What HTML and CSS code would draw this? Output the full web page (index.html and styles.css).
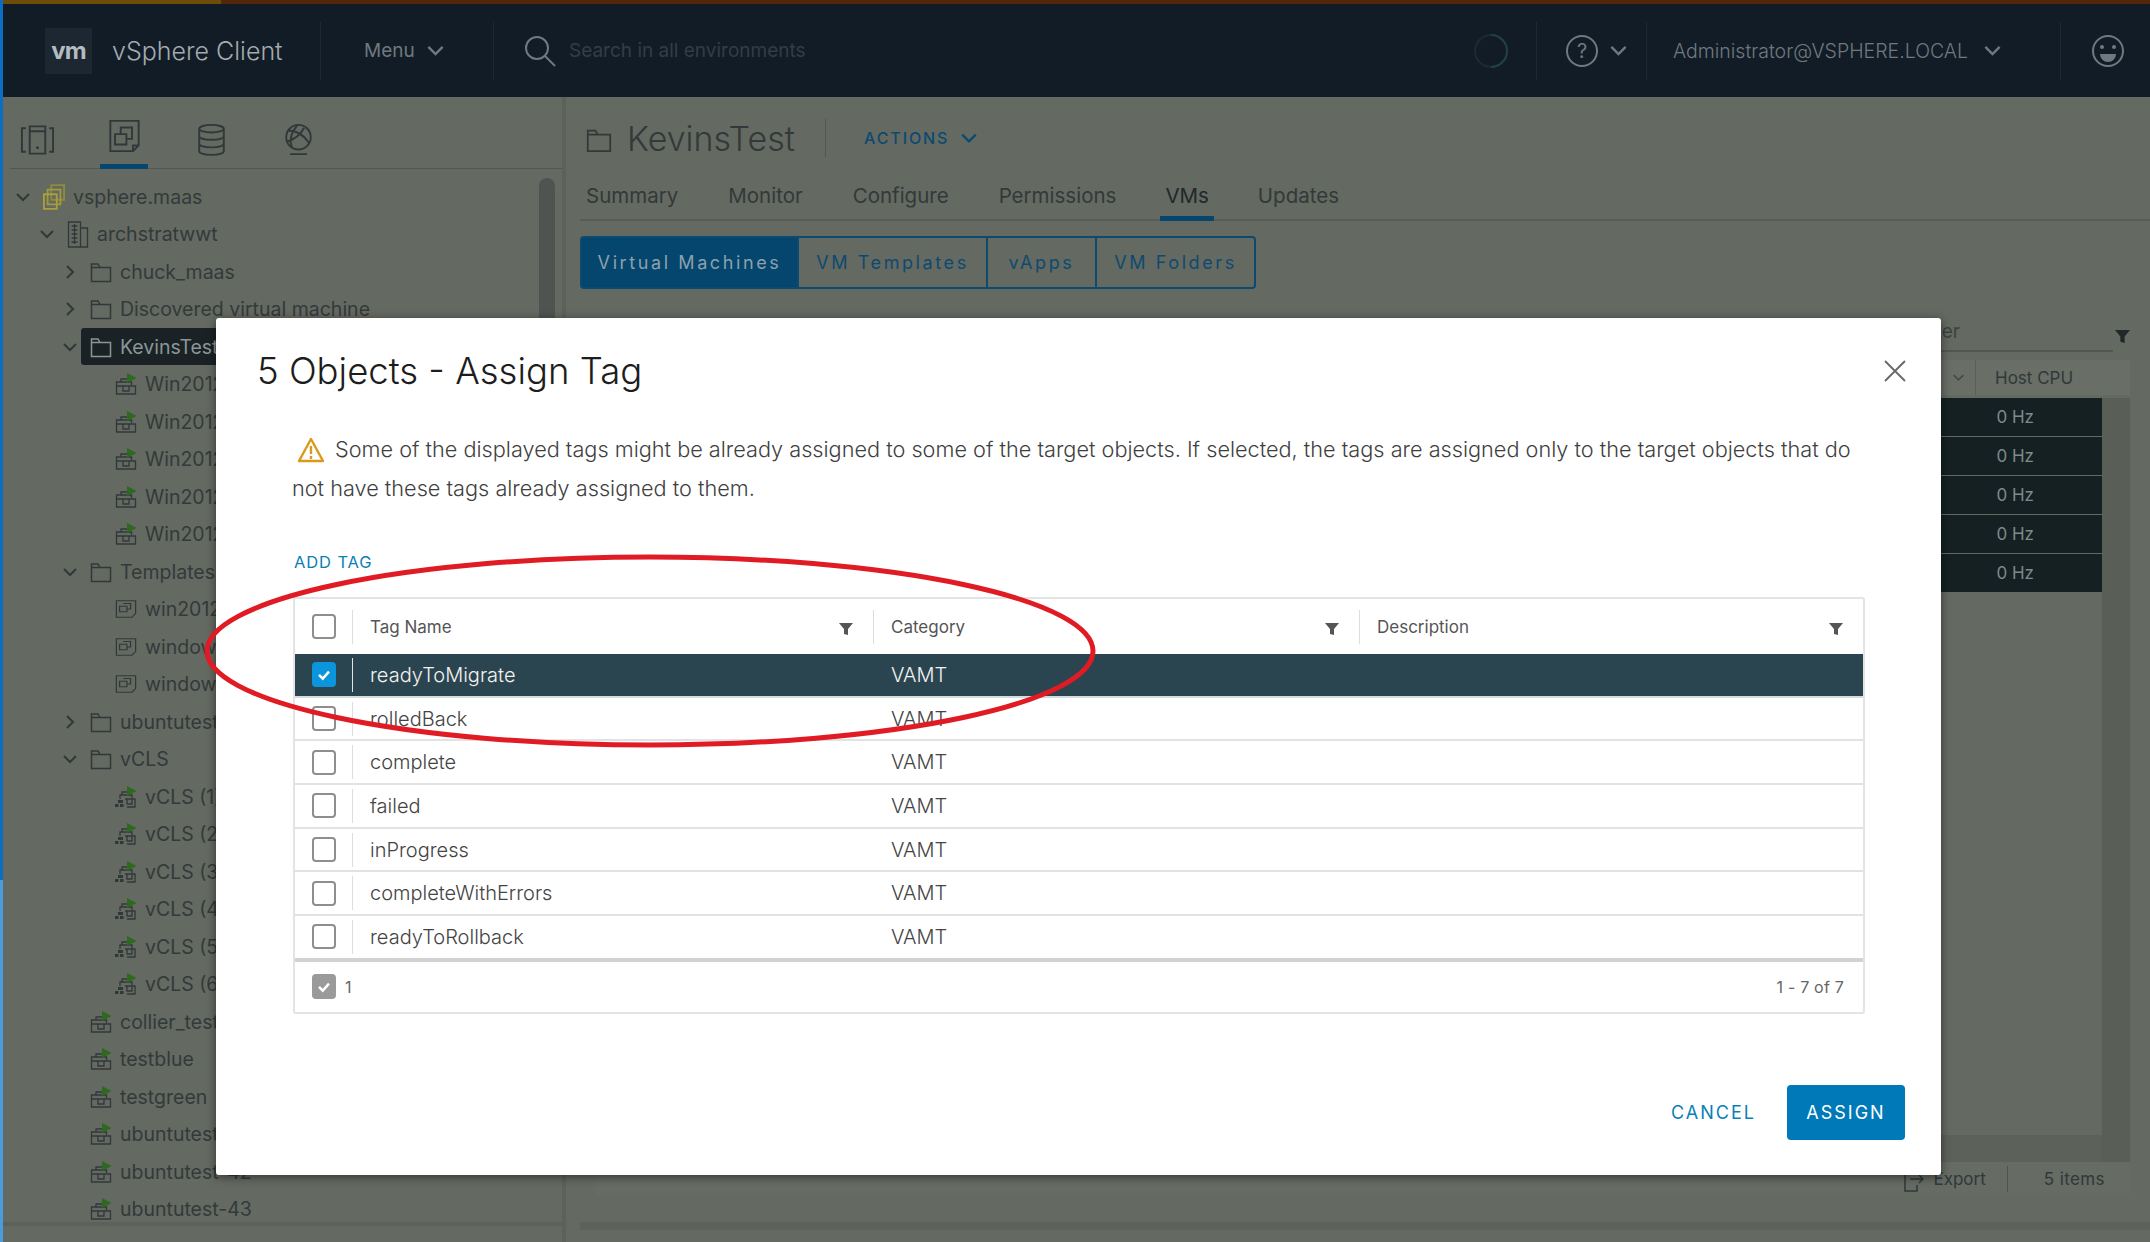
FILE: index.html
```html
<!DOCTYPE html>
<html lang="en">
<head>
  <meta charset="UTF-8">
  <title>vSphere Client</title>
  <link rel="stylesheet" href="styles.css">
</head>
<body>
  <svg class="defs" width="0" height="0">
    <symbol id="i-folder" viewBox="0 0 22 22"><path d="M1.5 20.5V3h6.5l2 3.5h10.500v14z M1.500 6.500h8.500" fill="none" stroke="currentColor" stroke-width="1.500"/></symbol>
    <symbol id="i-vm" viewBox="0 0 22 22"><path d="M6 9V6h7 M1.500 13V9h15v3 M1.500 13v8h19v-8z M8 13v5h6v-5 M1.500 13h19" fill="none" stroke="currentColor" stroke-width="1.300"/><path d="M12 0l9.500 5-9.500 5z" fill="#2c6a1f"/></symbol>
    <symbol id="i-vcls" viewBox="0 0 22 22"><path d="M7 9V6h6 M5 13V9h12v3 M10 13h10v8h-8 M12 13v5h5v-5" fill="none" stroke="currentColor" stroke-width="1.300"/><path d="M12 0l9.500 5-9.500 5z" fill="#2c6a1f"/><path d="M3 14h5v3H3z M0 18h3.500v3H0z M5 18h3.500v3H5z" fill="currentColor"/></symbol>
    <symbol id="i-tpl" viewBox="0 0 24 22"><path d="M1.500 2h21v14l-4 4H1.500z" fill="none" stroke="currentColor" stroke-width="1.300"/><path d="M5 8h8v6H5z M9 5h8v6h-4" fill="none" stroke="currentColor" stroke-width="1.300"/></symbol>
    <symbol id="i-dc" viewBox="0 0 22 28"><path d="M1.500 2h12v25h-12z M13.500 8h7v19h-7 M4.500 6h6 M4.500 10h6 M4.500 14h6 M4.500 18h6 M4.500 22h6 M7.500 4v20" fill="none" stroke="currentColor" stroke-width="1.300"/></symbol>
    <symbol id="i-cluster" viewBox="0 0 24 30"><path d="M9 2h14v16H9z" fill="none" stroke="#8f8a3c" stroke-width="2"/><path d="M5 7h14v16H5z" fill="none" stroke="#a39a3a" stroke-width="2"/><path d="M1 12h14v16H1z" fill="none" stroke="#a89f3e" stroke-width="2"/></symbol>
    <symbol id="i-filter" viewBox="0 0 14 14"><path d="M0 1h14L9 7v6l-4-1V7z" fill="currentColor"/></symbol>
    <symbol id="i-chev" viewBox="0 0 16 16"><path d="M2 5l6 6 6-6" fill="none" stroke="currentColor" stroke-width="2"/></symbol>
    <symbol id="i-check" viewBox="0 0 24 24"><path d="M6 12.500l4.500 4.500L18 8.500" fill="none" stroke="#fff" stroke-width="3"/></symbol>
  </svg>

  <div class="page">
    <div class="edge"></div>
    <div class="app">
      <div class="topstrip"></div>
      <header class="header">
        <div class="logo">vm</div>
        <div class="brand">vSphere Client</div>
        <div class="hsep"></div>
        <div class="menu">Menu <svg class="hchev"><use href="#i-chev"/></svg></div>
        <div class="hsep"></div>
        <svg class="search-icon" viewBox="0 0 32 32"><circle cx="13" cy="13" r="11" fill="none" stroke="currentColor" stroke-width="2"/><path d="M21 21l10 10" stroke="currentColor" stroke-width="2"/></svg>
        <div class="search-text">Search in all environments</div>
        <svg class="spinner" viewBox="0 0 36 36"><circle cx="18" cy="18" r="16" fill="none" stroke="#1c2a33" stroke-width="2"/><path d="M18 2a16 16 0 0 1 0 32" fill="none" stroke="#22404a" stroke-width="2"/></svg>
        <div class="hsep sep-spin"></div>
        <svg class="help" viewBox="0 0 34 34"><circle cx="17" cy="17" r="15" fill="none" stroke="currentColor" stroke-width="2"/><text x="17" y="24" text-anchor="middle" class="help-mark">?</text></svg>
        <svg class="hchev"><use href="#i-chev"/></svg>
        <div class="hsep sep-help"></div>
        <div class="user">Administrator@VSPHERE.LOCAL</div>
        <svg class="hchev"><use href="#i-chev"/></svg>
        <div class="hsep sep-user"></div>
        <svg class="smile" viewBox="0 0 34 34"><circle cx="17" cy="17" r="15" fill="none" stroke="currentColor" stroke-width="2"/><circle cx="11" cy="13" r="2" fill="currentColor"/><circle cx="23" cy="13" r="2" fill="currentColor"/><path d="M9 20h16a8 8 0 0 1-16 0z" fill="currentColor"/></svg>
      </header>

      <div class="content">
        <aside class="sidebar">
          <div class="nav-icons">
            <div class="nav-icon">
              <svg viewBox="0 0 36 32"><path d="M6 4H2v24h4 M30 4h4v24h-4 M10 2h16v28H10z M10 7h16" fill="none" stroke="currentColor" stroke-width="2"/><circle cx="18" cy="24" r="1.500" fill="currentColor"/></svg>
            </div>
            <div class="nav-icon active">
              <svg viewBox="0 0 36 36"><path d="M3 2h30v26l-6 6H3z M33 28h-6v6" fill="none" stroke="currentColor" stroke-width="2"/><path d="M8 16h12v11H8z M14 16V9h12v12h-6" fill="none" stroke="currentColor" stroke-width="2"/></svg>
            </div>
            <div class="nav-icon">
              <svg viewBox="0 0 32 36"><ellipse cx="16" cy="6" rx="13" ry="4" fill="none" stroke="currentColor" stroke-width="2"/><path d="M3 6v24c0 5 26 5 26 0V6 M3 14c0 5 26 5 26 0 M3 22c0 5 26 5 26 0" fill="none" stroke="currentColor" stroke-width="2"/></svg>
            </div>
            <div class="nav-icon">
              <svg viewBox="0 0 32 36"><circle cx="16" cy="15" r="13" fill="none" stroke="currentColor" stroke-width="2"/><path d="M5 8c8 0 16 4 22 13 M15 2C8 10 6 18 9 26 M22 5c-3 6-9 12-19 15 M7 33h18" fill="none" stroke="currentColor" stroke-width="2"/></svg>
            </div>
          </div>
          <div class="tree-wrap">
            <ul class="tree">
              <li class="node lvl-0"><svg class="chev"><use href="#i-chev"/></svg><svg class="ticon tall"><use href="#i-cluster"/></svg>vsphere.maas</li>
              <li class="node lvl-1"><svg class="chev"><use href="#i-chev"/></svg><svg class="ticon tall"><use href="#i-dc"/></svg>archstratwwt</li>
              <li class="node lvl-2"><svg class="chev closed"><use href="#i-chev"/></svg><svg class="ticon"><use href="#i-folder"/></svg>chuck_maas</li>
              <li class="node lvl-2"><svg class="chev closed"><use href="#i-chev"/></svg><svg class="ticon"><use href="#i-folder"/></svg>Discovered virtual machine</li>
              <li class="node lvl-2 selected"><svg class="chev"><use href="#i-chev"/></svg><span class="sel-bg"><svg class="ticon"><use href="#i-folder"/></svg>KevinsTest</span></li>
              <li class="node lvl-3"><span class="chev"></span><svg class="ticon"><use href="#i-vm"/></svg>Win2012-1</li>
              <li class="node lvl-3"><span class="chev"></span><svg class="ticon"><use href="#i-vm"/></svg>Win2012-2</li>
              <li class="node lvl-3"><span class="chev"></span><svg class="ticon"><use href="#i-vm"/></svg>Win2012-3</li>
              <li class="node lvl-3"><span class="chev"></span><svg class="ticon"><use href="#i-vm"/></svg>Win2012-4</li>
              <li class="node lvl-3"><span class="chev"></span><svg class="ticon"><use href="#i-vm"/></svg>Win2012-5</li>
              <li class="node lvl-2"><svg class="chev"><use href="#i-chev"/></svg><svg class="ticon"><use href="#i-folder"/></svg>Templates</li>
              <li class="node lvl-3"><span class="chev"></span><svg class="ticon"><use href="#i-tpl"/></svg>win2012</li>
              <li class="node lvl-3"><span class="chev"></span><svg class="ticon"><use href="#i-tpl"/></svg>windows</li>
              <li class="node lvl-3"><span class="chev"></span><svg class="ticon"><use href="#i-tpl"/></svg>windows</li>
              <li class="node lvl-2"><svg class="chev closed"><use href="#i-chev"/></svg><svg class="ticon"><use href="#i-folder"/></svg>ubuntutest</li>
              <li class="node lvl-2"><svg class="chev"><use href="#i-chev"/></svg><svg class="ticon"><use href="#i-folder"/></svg>vCLS</li>
              <li class="node lvl-3"><span class="chev"></span><svg class="ticon"><use href="#i-vcls"/></svg>vCLS (1)</li>
              <li class="node lvl-3"><span class="chev"></span><svg class="ticon"><use href="#i-vcls"/></svg>vCLS (2)</li>
              <li class="node lvl-3"><span class="chev"></span><svg class="ticon"><use href="#i-vcls"/></svg>vCLS (3)</li>
              <li class="node lvl-3"><span class="chev"></span><svg class="ticon"><use href="#i-vcls"/></svg>vCLS (4)</li>
              <li class="node lvl-3"><span class="chev"></span><svg class="ticon"><use href="#i-vcls"/></svg>vCLS (5)</li>
              <li class="node lvl-3"><span class="chev"></span><svg class="ticon"><use href="#i-vcls"/></svg>vCLS (6)</li>
              <li class="node lvl-2"><span class="chev"></span><svg class="ticon"><use href="#i-vm"/></svg>collier_test</li>
              <li class="node lvl-2"><span class="chev"></span><svg class="ticon"><use href="#i-vm"/></svg>testblue</li>
              <li class="node lvl-2"><span class="chev"></span><svg class="ticon"><use href="#i-vm"/></svg>testgreen</li>
              <li class="node lvl-2"><span class="chev"></span><svg class="ticon"><use href="#i-vm"/></svg>ubuntutest</li>
              <li class="node lvl-2"><span class="chev"></span><svg class="ticon"><use href="#i-vm"/></svg>ubuntutest-42</li>
              <li class="node lvl-2"><span class="chev"></span><svg class="ticon"><use href="#i-vm"/></svg>ubuntutest-43</li>
            </ul>
            <div class="tree-scroll"></div>
          </div>
        </aside>

        <main class="main">
          <div class="title-row">
            <svg class="title-folder"><use href="#i-folder"/></svg>
            <h1>KevinsTest</h1>
            <div class="title-sep"></div>
            <div class="actions">ACTIONS <svg class="actions-chev"><use href="#i-chev"/></svg></div>
          </div>
          <nav class="tabs">
            <span class="tab">Summary</span>
            <span class="tab">Monitor</span>
            <span class="tab">Configure</span>
            <span class="tab">Permissions</span>
            <span class="tab active">VMs</span>
            <span class="tab">Updates</span>
          </nav>
          <div class="subnav">
            <span class="sub active">Virtual Machines</span>
            <span class="sub w-tpl">VM Templates</span>
            <span class="sub w-app">vApps</span>
            <span class="sub w-fold">VM Folders</span>
          </div>

          <div class="grid">
            <div class="grid-filter">
              <span class="filter-box">Filter</span>
              <svg class="grid-funnel"><use href="#i-filter"/></svg>
            </div>
            <div class="grid-head">
              <svg class="head-chev"><use href="#i-chev"/></svg>
              <span class="head-cell">Host CPU</span>
            </div>
            <div class="grid-body">
              <div class="grid-rows">
                <div class="grid-row">0 Hz</div>
                <div class="grid-row">0 Hz</div>
                <div class="grid-row">0 Hz</div>
                <div class="grid-row">0 Hz</div>
                <div class="grid-row">0 Hz</div>
                <div class="grid-hscroll"></div>
              </div>
              <div class="grid-vscroll"></div>
            </div>
            <div class="grid-foot">
              <svg class="export-icon" viewBox="0 0 20 26"><path d="M13 8V2H1v23h12v-6 M6 13h13 M15 9l4 4-4 4" fill="none" stroke="currentColor" stroke-width="1.500"/></svg>
              <span>Export</span>
              <span class="foot-sep"></span>
              <span class="foot-count">5 items</span>
            </div>
          </div>
          <div class="main-bottom"></div>
        </main>
      </div>
    </div>

    <section class="modal">
      <div class="modal-head">
        <h2>5 Objects - Assign Tag</h2>
        <svg class="close" viewBox="0 0 22 22"><path d="M1 1l20 20M21 1L1 21" stroke="currentColor" stroke-width="1.800"/></svg>
      </div>
      <p class="warning"><svg class="warn-icon" viewBox="0 0 28 26"><path d="M14 2l12 22H2z" fill="none" stroke="#d99a1c" stroke-width="2.400" stroke-linejoin="round"/><path d="M14 9v8M14 19v3" stroke="#d99a1c" stroke-width="2.400"/></svg>Some of the displayed tags might be already assigned to some of the target objects. If selected, the tags are assigned only to the target objects that do<br>not have these tags already assigned to them.</p>
      <a class="add-tag">ADD TAG</a>
      <div class="tag-table">
        <div class="tag-row tag-head">
          <span class="cb-cell"><span class="cb"></span></span>
          <span class="cell">Tag Name<svg class="funnel"><use href="#i-filter"/></svg></span>
          <span class="cell">Category<svg class="funnel"><use href="#i-filter"/></svg></span>
          <span class="cell">Description<svg class="funnel"><use href="#i-filter"/></svg></span>
        </div>
        <div class="tag-row picked">
          <span class="cb-cell"><span class="cb on"><svg><use href="#i-check"/></svg></span></span>
          <span class="cell">readyToMigrate</span><span class="cell">VAMT</span><span class="cell"></span>
        </div>
        <div class="tag-row">
          <span class="cb-cell"><span class="cb"></span></span>
          <span class="cell">rolledBack</span><span class="cell">VAMT</span><span class="cell"></span>
        </div>
        <div class="tag-row">
          <span class="cb-cell"><span class="cb"></span></span>
          <span class="cell">complete</span><span class="cell">VAMT</span><span class="cell"></span>
        </div>
        <div class="tag-row">
          <span class="cb-cell"><span class="cb"></span></span>
          <span class="cell">failed</span><span class="cell">VAMT</span><span class="cell"></span>
        </div>
        <div class="tag-row">
          <span class="cb-cell"><span class="cb"></span></span>
          <span class="cell">inProgress</span><span class="cell">VAMT</span><span class="cell"></span>
        </div>
        <div class="tag-row">
          <span class="cb-cell"><span class="cb"></span></span>
          <span class="cell">completeWithErrors</span><span class="cell">VAMT</span><span class="cell"></span>
        </div>
        <div class="tag-row">
          <span class="cb-cell"><span class="cb"></span></span>
          <span class="cell">readyToRollback</span><span class="cell">VAMT</span><span class="cell"></span>
        </div>
        <div class="tag-foot">
          <span class="cb gray"><svg><use href="#i-check"/></svg></span>
          <span class="foot-num">1</span>
          <span class="foot-range">1 - 7 of 7</span>
        </div>
      </div>
      <div class="modal-actions">
        <button class="btn-link">CANCEL</button>
        <button class="btn-solid">ASSIGN</button>
      </div>
    </section>

    <svg class="markup" viewBox="0 0 2150 1242"><ellipse cx="650" cy="651" rx="443" ry="94" fill="none" stroke="#e01b24" stroke-width="5"/></svg>
  </div>
</body>
</html>
```

FILE: styles.css
```css
* {
  box-sizing: border-box;
}
html, body {
  margin: 0;
  height: 100%;
}
body {
  font-family: Inter, "Liberation Sans", sans-serif;
  background-color: #646961;
  overflow: hidden;
}
.defs {
  position: absolute;
}
.page {
  position: relative;
  width: 2150px;
  height: 1242px;
  display: flex;
  overflow: hidden;
}
.edge {
  width: 3px;
  background: linear-gradient(#0b6ec0 0, #0b6ec0 880px, #4a9ddb 880px);
}
.app {
  flex: 1;
  min-width: 0;
  display: flex;
  flex-direction: column;
}
.topstrip {
  height: 4px;
  background: linear-gradient(90deg, #6b4d08 0, #6b4d08 218px, #52260a 218px);
}

/* header */
.header {
  height: 93px;
  background-color: #121c26;
  color: #8d979c;
  display: flex;
  align-items: center;
  padding-left: 42px;
}
.logo {
  width: 47px;
  height: 46px;
  background-color: #1c2732;
  color: #b4bcc0;
  font-size: 24px;
  font-weight: 700;
  letter-spacing: -1px;
  display: flex;
  align-items: center;
  justify-content: center;
}
.brand {
  margin-left: 20px;
  font-size: 25px;
  font-weight: 300;
  color: #a3abb0;
  width: 208px;
}
.hsep {
  width: 1px;
  height: 58px;
  background-color: #1d2833;
}
.menu {
  margin-left: 43px;
  width: 129px;
  font-size: 19px;
  color: #6f797f;
  display: flex;
  align-items: center;
  gap: 11px;
}
.hchev {
  width: 19px;
  height: 19px;
  color: #6f797f;
  flex: none;
}
.search-icon {
  width: 32px;
  height: 32px;
  margin-left: 30px;
  color: #6f797f;
}
.search-text {
  margin-left: 13px;
  width: 670px;
  font-size: 19px;
  color: #333d47;
}
.spinner {
  width: 36px;
  height: 36px;
  margin-left: 234px;
}
.sep-spin {
  margin-left: 27px;
}
.help {
  width: 34px;
  height: 34px;
  margin-left: 28px;
  color: #6f797f;
}
.help-mark {
  font-size: 20px;
  fill: currentColor;
}
.help + .hchev {
  margin-left: 10px;
}
.sep-help {
  margin-left: 18px;
}
.user {
  margin-left: 26px;
  font-size: 19.500px;
  font-weight: 300;
  color: #6f797f;
  width: 310px;
  white-space: nowrap;
}
.sep-user {
  margin-left: 58px;
}
.smile {
  width: 34px;
  height: 34px;
  margin-left: 30px;
  color: #6f797f;
}

/* left tree */
.content {
  flex: 1;
  display: flex;
  min-height: 0;
}
.sidebar {
  width: 563px;
  flex: none;
  border-right: 4px solid #5c615a;
  display: flex;
  flex-direction: column;
}
.nav-icons {
  height: 72px;
  margin-left: 7px;
  border-bottom: 1px solid #53584f;
  display: flex;
  color: #30383a;
}
.nav-icon {
  width: 48px;
  height: 72px;
  margin-left: 3px;
  margin-right: 36px;
  display: flex;
  align-items: center;
  justify-content: center;
  padding-top: 14px;
}
.nav-icon svg {
  width: 35px;
  height: 34px;
}
.nav-icon.active {
  border-bottom: 5px solid #04466e;
  padding-top: 10px;
}
.tree-wrap {
  flex: 1;
  min-height: 0;
  display: flex;
  padding-top: 9px;
  border-bottom: 4px solid #5c615a;
  margin-bottom: 16px;
}
.tree {
  flex: 1;
  list-style: none;
  margin: 0;
  padding: 0;
  color: #333a3b;
  font-size: 19.500px;
}
.node {
  height: 37.500px;
  display: flex;
  align-items: center;
  white-space: nowrap;
}
.lvl-0 {
  padding-left: 12px;
}
.lvl-1 {
  padding-left: 36px;
}
.lvl-2 {
  padding-left: 59px;
}
.lvl-3 {
  padding-left: 84px;
}
.chev {
  width: 16px;
  height: 16px;
  margin-right: 12px;
  flex: none;
  color: #30383a;
}
.chev.closed {
  transform: rotate(-90deg);
}
.ticon {
  width: 22px;
  height: 22px;
  margin-right: 8px;
  flex: none;
  color: #30383a;
}
.ticon.tall {
  height: 28px;
}
.selected {
  color: #8b9697;
}
.sel-bg {
  display: flex;
  align-items: center;
  height: 37px;
  margin-left: -9px;
  padding-left: 9px;
  width: 360px;
  background-color: #1a2226;
  border-radius: 3px;
}
.selected .ticon {
  color: #8b9697;
}
.tree-scroll {
  width: 16px;
  margin-right: 7px;
  background-color: #4f5450;
  border-radius: 8px;
  height: 500px;
}

/* main */
.main {
  flex: 1;
  min-width: 0;
  padding-left: 14px;
  display: flex;
  flex-direction: column;
}
.title-row {
  height: 82px;
  padding-left: 6px;
  display: flex;
  align-items: center;
  color: #33393a;
}
.title-folder {
  width: 26px;
  height: 26px;
  margin-top: 4px;
  color: #33393a;
}
h1 {
  margin: 0 0 0 15px;
  font-size: 34px;
  font-weight: 300;
  width: 198px;
}
.title-sep {
  width: 1px;
  height: 38px;
  background-color: #53584f;
}
.actions {
  margin-left: 38px;
  font-size: 16px;
  font-weight: 500;
  letter-spacing: 1.900px;
  color: #0d4a70;
  display: flex;
  align-items: center;
  gap: 11px;
}
.actions-chev {
  width: 18px;
  height: 18px;
}
.tabs {
  height: 42px;
  border-bottom: 2px solid #575c55;
  display: flex;
  align-items: flex-start;
  padding-top: 4px;
  font-size: 20.500px;
  color: #33393a;
}
.tab {
  margin-left: 5px;
  margin-right: 43px;
  height: 38px;
  padding: 0 1px;
}
.tab.active {
  border-bottom: 5px solid #04466e;
  margin-left: 0;
  margin-right: 38px;
  padding: 0 5px;
  color: #20282a;
}
.subnav {
  margin-top: 15px;
  height: 53px;
  display: flex;
  font-size: 18px;
  letter-spacing: 2.600px;
  color: #0d4a70;
}
.sub {
  border: 2px solid #0d4a70;
  border-left-width: 0;
  display: flex;
  align-items: center;
  justify-content: center;
  white-space: nowrap;
}
.sub.active {
  width: 219px;
  background-color: #04466e;
  color: #8ea0aa;
  border-left-width: 2px;
  border-radius: 4px 0 0 4px;
}
.w-tpl {
  width: 189px;
}
.w-app {
  width: 109px;
}
.w-fold {
  width: 159px;
  border-radius: 0 4px 4px 0;
}

/* grid behind the dialog */
.grid {
  flex: 1;
  min-height: 0;
  margin: 31px 20px 0 16px;
  display: flex;
  flex-direction: column;
  color: #30383a;
}
.grid-filter {
  height: 32px;
  display: flex;
  justify-content: flex-end;
  align-items: flex-start;
}
.filter-box {
  width: 198px;
  height: 32px;
  margin-right: 2px;
  border-bottom: 2px solid #53584f;
  font-size: 19px;
  color: #3c4242;
}
.grid-funnel {
  width: 15px;
  height: 15px;
  margin: 9px 0 0 0;
  color: #20282a;
}
.grid-head {
  margin-top: 8px;
  height: 35px;
  background-color: #696e66;
  display: flex;
  align-items: center;
  justify-content: flex-end;
  font-size: 17px;
}
.head-chev {
  width: 13px;
  height: 13px;
  margin-right: 10px;
  color: #454b49;
}
.head-cell {
  width: 155px;
  height: 35px;
  padding-left: 19px;
  border-left: 1px solid #595e57;
  display: flex;
  align-items: center;
}
.grid-body {
  flex: 1;
  min-height: 0;
  margin-top: 3px;
  display: flex;
}
.grid-rows {
  flex: 1;
  display: flex;
  flex-direction: column;
}
.grid-row {
  height: 38px;
  margin-bottom: 1px;
  background-color: #142022;
  color: #7f8a8a;
  font-size: 17px;
  display: flex;
  align-items: center;
  justify-content: flex-end;
  padding-right: 68px;
}
.grid-hscroll {
  margin-top: auto;
  height: 27px;
  background-color: #5c6159;
}
.grid-vscroll {
  width: 28px;
  background-color: #595e57;
}
.grid-foot {
  height: 33px;
  background-color: #666b63;
  display: flex;
  align-items: center;
  justify-content: flex-end;
  font-size: 17px;
}
.export-icon {
  width: 20px;
  height: 26px;
  margin-right: 9px;
}
.foot-sep {
  width: 1px;
  height: 26px;
  margin: 0 36px 0 21px;
  background-color: #4f544e;
}
.foot-count {
  margin-right: 25px;
  letter-spacing: 0.400px;
}
.main-bottom {
  height: 35px;
  flex: none;
  border-bottom: 8px solid #5c615a;
  margin-bottom: 12px;
}

/* dialog */
.modal {
  position: absolute;
  left: 216px;
  top: 318px;
  width: 1725px;
  height: 857px;
  background-color: #fff;
  border-radius: 3px;
  box-shadow: 0 2px 10px rgba(0, 0, 0, 0.5);
  display: flex;
  flex-direction: column;
}
.modal-head {
  height: 106px;
  padding: 0 35px 0 41px;
  display: flex;
  align-items: center;
  justify-content: space-between;
}
h2 {
  margin: 0;
  font-size: 36.500px;
  font-weight: 300;
  color: #1d1d1d;
}
.close {
  width: 22px;
  height: 22px;
  color: #666;
}
.warning {
  margin: 0;
  padding: 6px 76px 0;
  font-size: 21.700px;
  line-height: 39px;
  font-weight: 300;
  color: #3f3f3f;
  white-space: nowrap;
}
.warn-icon {
  width: 28px;
  height: 26px;
  margin: 0 10px 0 5px;
  vertical-align: -6px;
}
.add-tag {
  margin: 44px 0 0 78px;
  font-size: 16.500px;
  letter-spacing: 0.900px;
  color: #0a7fb5;
  height: 20px;
}
.tag-table {
  margin: 25px 76px 0 77px;
  height: 417px;
  border: 2px solid #e4e4e4;
  border-radius: 3px;
  display: flex;
  flex-direction: column;
}
.tag-row {
  height: 43.700px;
  flex: none;
  display: grid;
  grid-template-columns: 57px 521px 486px 1fr;
  align-items: center;
  font-size: 20px;
  font-weight: 300;
  color: #444;
  border-bottom: 2px solid #e2e2e2;
}
.tag-head {
  height: 55px;
  font-size: 17px;
  font-weight: 400;
  color: #555;
  border-bottom: 0;
}
.cb-cell {
  display: flex;
  justify-content: center;
}
.cb {
  width: 24px;
  height: 25px;
  border: 2px solid #8e8e8e;
  border-radius: 4px;
  display: inline-flex;
  background-color: #fff;
  flex: none;
}
.cb svg {
  width: 100%;
  height: 100%;
}
.cb.on {
  background-color: #0a95dc;
  border-color: #0a95dc;
}
.cb.gray {
  background-color: #9a9a9a;
  border-color: #9a9a9a;
}
.cell {
  height: 34px;
  padding: 0 20px 0 17px;
  border-left: 1px solid #ddd;
  display: flex;
  align-items: center;
  justify-content: space-between;
}
.tag-row .cell:nth-child(n+3) {
  border-left-color: transparent;
}
.tag-head .cell:nth-child(n+3) {
  border-left-color: #ddd;
}
.funnel {
  width: 14px;
  height: 14px;
  margin-top: 4px;
  color: #555;
}
.picked {
  background-color: #2b4550;
  color: #f2f2f2;
  border-bottom-color: #d5dcdc;
}
.picked .cell:nth-child(2) {
  border-left-color: #dfe5e5;
}
.tag-foot {
  flex: 1;
  border-top: 4px solid #d2d2d2;
  margin-top: -2px;
  padding: 0 19px 0 17px;
  display: flex;
  align-items: center;
  font-size: 16px;
  color: #666;
}
.foot-num {
  margin-left: 9px;
}
.foot-range {
  margin-left: auto;
  letter-spacing: 0.200px;
}
.modal-actions {
  margin-top: auto;
  padding: 0 36px 35px 0;
  display: flex;
  justify-content: flex-end;
  align-items: center;
  gap: 31px;
}
.btn-link, .btn-solid {
  font-family: inherit;
  font-size: 18px;
  letter-spacing: 2px;
  border: none;
  cursor: pointer;
}
.btn-link {
  background: none;
  color: #0a7fb5;
  padding: 0;
}
.btn-solid {
  width: 118px;
  height: 55px;
  background-color: #0079b8;
  color: #fff;
  border-radius: 4px;
}
.markup {
  position: absolute;
  left: 0;
  top: 0;
  width: 2150px;
  height: 1242px;
  pointer-events: none;
}
```
